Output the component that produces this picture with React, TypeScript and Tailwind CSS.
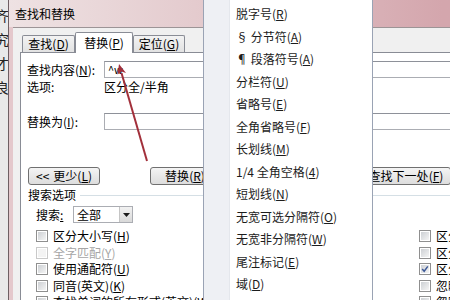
import React from 'react';

const FONT = "font-['Noto_Sans_CJK_SC','Liberation_Sans',sans-serif]";

const MENU_ITEMS: [string, string][] = [
  ['脱字号', 'R'],
  ['§ 分节符', 'A'],
  ['¶ 段落符号', 'A'],
  ['分栏符', 'U'],
  ['省略号', 'E'],
  ['全角省略号', 'F'],
  ['长划线', 'M'],
  ['1/4 全角空格', '4'],
  ['短划线', 'N'],
  ['无宽可选分隔符', 'O'],
  ['无宽非分隔符', 'W'],
  ['尾注标记', 'E'],
  ['域', 'D'],
  ['图形', 'I'],
];

const LEFT_OPTIONS = [
  { label: '区分大小写', k: 'H' },
  { label: '全字匹配', k: 'Y', disabled: true },
  { label: '使用通配符', k: 'U' },
  { label: '同音(英文)', k: 'K' },
  { label: '查找单词的所有形式(英文)', k: 'W' },
];

const RIGHT_OPTIONS = [
  { label: '区分前缀', k: 'X' },
  { label: '区分后缀', k: 'T' },
  { label: '区分全/半角', k: 'M', checked: true },
  { label: '忽略标点符号', k: 'S' },
  { label: '忽略空格', k: 'A' },
];

const Acc = ({ text, k }: { text: string; k: string }) => (
  <span className="whitespace-nowrap">
    {text}(<span className="underline">{k}</span>)
  </span>
);

const Checkbox = ({ checked, disabled }: { checked?: boolean; disabled?: boolean }) => (
  <div
    className={`w-[12px] h-[12px] shrink-0 border bg-white p-[1px] ${
      disabled ? 'border-[#c9c9c9]' : 'border-[#8f8f8f]'
    }`}
  >
    <div
      className={`w-full h-full relative ${
        disabled ? 'bg-[#f3f3f3]' : 'bg-linear-to-br from-[#cdd0d4] to-[#f4f4f4]'
      }`}
    >
      {checked && (
        <svg viewBox="0 0 10 10" className="absolute inset-0 w-full h-full">
          <path d="M1.5 5 L4 7.8 L8.5 1.8" stroke="#3b5796" strokeWidth="1.8" fill="none" />
        </svg>
      )}
    </div>
  </div>
);

const Button = ({ children, className = '' }: { children: React.ReactNode; className?: string }) => (
  <div
    className={`h-[18px] shrink-0 flex items-center justify-center rounded-[3px] border border-[#707070] bg-linear-to-b from-[#f4f4f4] to-[#dddddd] ${className}`}
  >
    {children}
  </div>
);

const Tab = ({ children, active, className = '' }: { children: React.ReactNode; active?: boolean; className?: string }) => (
  <div
    className={`flex items-center justify-center border border-b-0 border-[#898c95] rounded-t-[2px] ${
      active ? 'h-[21px] bg-white -mb-px relative z-10' : 'h-[17px] bg-linear-to-b from-[#f3f3f3] to-[#e2e2e2]'
    } ${className}`}
  >
    {children}
  </div>
);

export default function App() {
  return (
    <div className={`relative w-[450px] h-[300px] overflow-hidden flex bg-[#e4e4e4] text-[12px] text-black ${FONT}`}>
      {/* Word document behind the dialog */}
      <div className="w-[8px] shrink-0 overflow-hidden bg-[#e9e9e9] pt-[3px] text-[14px] leading-[24px] text-[#222]">
        <div className="-ml-[5px] flex flex-col">
          <span>齐</span>
          <span>究</span>
          <span>才</span>
          <span>良</span>
        </div>
      </div>

      {/* Find and replace dialog */}
      <div className="w-[620px] shrink-0 flex flex-col border-l border-[#6e5f63] bg-[#e4c8cc]">
        <div className="h-[27px] shrink-0 flex items-center pl-[6px] bg-linear-to-r from-[#eee2e3] via-[#e4cbce] via-30% to-[#d4a6ad] to-70%">
          查找和替换
        </div>
        <div className="flex-1 ml-[4px] border-t border-[#9c9496] bg-[#f0f0f0] pl-[7px] pt-[3px]">
          <div className="flex items-end h-[21px] pl-[2px]">
            <Tab className="w-[53px]">
              <Acc text="查找" k="D" />
            </Tab>
            <Tab active className="w-[58px]">
              <Acc text="替换" k="P" />
            </Tab>
            <Tab className="w-[52px]">
              <Acc text="定位" k="G" />
            </Tab>
          </div>

          <div className="h-[270px] border border-[#898c95] bg-white pl-[6px] pt-[8px]">
            <div className="flex items-center h-[17px]">
              <div className="w-[77px]">
                <Acc text="查找内容" k="N" />:
              </div>
              <div className="w-[440px] h-[17px] flex items-center border border-[#abadb3] border-t-[#8e9199] pl-[3px] text-[11px] leading-none">
                ^w
              </div>
            </div>
            <div className="flex items-center h-[18px]">
              <div className="w-[77px]">选项:</div>
              <div>区分全/半角</div>
            </div>
            <div className="flex items-center h-[17px] mt-[17px]">
              <div className="w-[77px]">
                <Acc text="替换为" k="I" />:
              </div>
              <div className="w-[440px] h-[17px] border border-[#abadb3] border-t-[#8e9199]" />
            </div>

            <div className="flex items-center mt-[37px]">
              <Button className="ml-[1px] w-[72px]">
                &lt;&lt; <span className="ml-[4px]"><Acc text="更少" k="L" /></span>
              </Button>
              <Button className="ml-[50px] w-[70px]">
                <Acc text="替换" k="R" />
              </Button>
              <Button className="ml-[6px] w-[70px]">
                <Acc text="全部替换" k="A" />
              </Button>
              <Button className="ml-[65px] w-[90px] border-[#3c7fb1]">
                <Acc text="查找下一处" k="F" />
              </Button>
              <Button className="ml-[6px] w-[70px]">取消</Button>
            </div>

            <div className="flex items-center h-[14px] mt-[3px]">
              <div className="ml-[1px]">搜索选项</div>
              <div className="flex-1 h-px bg-[#d5dfe5] ml-[4px] mr-[6px]" />
            </div>

            <div className="flex items-center h-[17px] mt-[4px] pl-[9px]">
              <div className="w-[37px]">
                搜索<span className="underline">:</span>
              </div>
              <div className="w-[60px] h-[17px] flex border border-[#abadb3] bg-white">
                <div className="flex-1 flex items-center pl-[3px]">全部</div>
                <div className="w-[13px] flex items-center justify-center border-l border-[#c5c5c5] bg-linear-to-b from-[#f2f2f2] to-[#d9d9d9]">
                  <svg viewBox="0 0 7 4" className="w-[7px] h-[4px]">
                    <path d="M0 0 H7 L3.5 4 Z" fill="#1a1a1a" />
                  </svg>
                </div>
              </div>
            </div>

            <div className="flex mt-[5px] pl-[9px]">
              <div className="w-[383px] flex flex-col">
                {LEFT_OPTIONS.map((o) => (
                  <div key={o.label} className="h-[16.5px] flex items-center gap-[5px]">
                    <Checkbox disabled={o.disabled} />
                    <span className={o.disabled ? 'text-[#a6a6a6]' : ''}>
                      <Acc text={o.label} k={o.k} />
                    </span>
                  </div>
                ))}
              </div>
              <div className="flex flex-col">
                {RIGHT_OPTIONS.map((o) => (
                  <div key={o.label} className="h-[16.5px] flex items-center gap-[5px]">
                    <Checkbox checked={o.checked} />
                    <Acc text={o.label} k={o.k} />
                  </div>
                ))}
              </div>
            </div>
          </div>
        </div>
      </div>

      {/* Special characters menu */}
      <div className="absolute left-[203px] top-0 w-[170px] h-[320px] flex border-x border-[#9aa3b4] bg-white text-[#1c1c1c]">
        <div className="w-[26px] shrink-0 bg-[#eef0f4] border-r border-[#e4e7ec]" />
        <div className="flex flex-col pt-[3px] pl-[6px]">
          {MENU_ITEMS.map(([t, k], i) => (
            <div key={i} className="h-[22.5px] flex items-center">
              <Acc text={t} k={k} />
            </div>
          ))}
        </div>
      </div>

      {/* Red annotation arrow */}
      <svg className="absolute inset-0 pointer-events-none" width="450" height="300" viewBox="0 0 450 300">
        <line x1="147" y1="161" x2="121.5" y2="73" stroke="#a2303b" strokeWidth="2" />
        <path d="M119 64 L126 73 L121.5 71.5 L117.5 74.5 Z" fill="#a2303b" />
      </svg>
    </div>
  );
}
